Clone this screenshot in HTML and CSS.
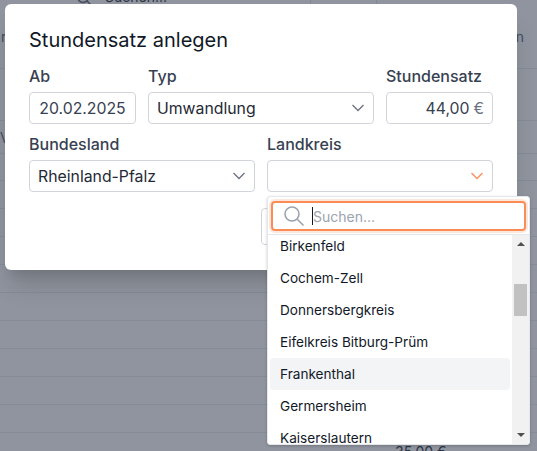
FILE: index.html
```html
<!DOCTYPE html>
<html lang="de">
<head>
  <meta charset="UTF-8">
  <meta name="viewport" content="width=device-width, initial-scale=1.0">
  <title>Stundensatz anlegen</title>
  <link rel="stylesheet" href="styles.css">
</head>
<body>
  <!-- table behind the modal -->
  <div class="page">
    <div class="top-search">
      <svg class="top-search-icon" width="16" height="16" viewBox="0 0 16 16"><circle cx="5" cy="-3" r="5.5" fill="none" stroke="#6b7280" stroke-width="1.5"/><path d="M9 1l4 4" stroke="#6b7280" stroke-width="1.5"/></svg>
      <span class="top-search-text">Suchen...</span>
      <div class="top-cell top-cell-first"></div>
      <div class="top-cell"></div>
    </div>
    <div class="table-head">
      <span>r</span>
      <span>n</span>
    </div>
    <div class="row row-52"></div>
    <div class="row row-33"><span>V</span></div>
    <div class="row row-27"></div>
    <div class="row"></div>
    <div class="row"></div>
    <div class="row"></div>
    <div class="row"></div>
    <div class="row"></div>
    <div class="row"></div>
    <div class="row"></div>
    <div class="row"></div>
    <div class="row"></div>
    <div class="row row-price"><span>35,00 €</span></div>
  </div>

  <div class="backdrop"></div>

  <div class="modal">
    <h2 class="modal-title">Stundensatz anlegen</h2>
    <div class="form-grid">
      <div class="field">
        <label>Ab</label>
        <div class="control control-center">20.02.2025</div>
      </div>
      <div class="field span-2">
        <label>Typ</label>
        <div class="control control-select">
          <span>Umwandlung</span>
          <svg class="chevron" width="14" height="8" viewBox="0 0 14 8"><path d="M1.5 1l5.5 5.5L12.5 1" fill="none" stroke="#6b7280" stroke-width="1.3"/></svg>
        </div>
      </div>
      <div class="field">
        <label>Stundensatz</label>
        <div class="control control-right">44,00 <span class="currency">€</span></div>
      </div>
      <div class="field span-2">
        <label>Bundesland</label>
        <div class="control control-select">
          <span>Rheinland-Pfalz</span>
          <svg class="chevron" width="14" height="8" viewBox="0 0 14 8"><path d="M1.5 1l5.5 5.5L12.5 1" fill="none" stroke="#6b7280" stroke-width="1.3"/></svg>
        </div>
      </div>
      <div class="field span-2">
        <label>Landkreis</label>
        <div class="control control-select">
          <span></span>
          <svg class="chevron" width="14" height="8" viewBox="0 0 14 8"><path d="M1.5 1l5.5 5.5L12.5 1" fill="none" stroke="#fb8c55" stroke-width="1.3"/></svg>
        </div>
      </div>
    </div>
    <div class="modal-footer">
      <button class="btn">Abbrechen</button>
      <button class="btn">Speichern</button>
    </div>
  </div>

  <div class="dropdown">
    <div class="search-wrap">
      <div class="search-box">
        <svg width="22" height="22" viewBox="0 0 22 22"><circle cx="9" cy="9" r="7" fill="none" stroke="#9ca3af" stroke-width="1.6"/><path d="M14 14l6.5 6.5" stroke="#9ca3af" stroke-width="1.6"/></svg>
        <span class="caret"></span>
        <span class="placeholder">Suchen...</span>
      </div>
    </div>
    <div class="list-wrap">
      <ul class="list">
        <li>Birkenfeld</li>
        <li>Cochem-Zell</li>
        <li>Donnersbergkreis</li>
        <li>Eifelkreis Bitburg-Prüm</li>
        <li class="active">Frankenthal</li>
        <li>Germersheim</li>
        <li>Kaiserslautern</li>
      </ul>
      <div class="scrollbar">
        <span class="arrow arrow-up"></span>
        <div class="track"><div class="thumb"></div></div>
        <span class="arrow arrow-down"></span>
      </div>
    </div>
  </div>
</body>
</html>
```

FILE: styles.css
```css
/* page behind the modal */
html, body {
  height: 100%;
  margin: 0;
  padding: 0;
}

body {
  position: relative;
  overflow: hidden;
  background-color: #fff;
  font-family: Inter, "Liberation Sans", sans-serif;
}

.page {
  height: 451px;
  overflow: hidden;
  color: #374151;
  font-size: 14px;
}

.top-search {
  display: flex;
  gap: 11px;
  width: 442px;
  height: 4px;
  box-sizing: border-box;
  padding-left: 78px;
  overflow: hidden;
  line-height: 0;
}

.top-search-icon {
  flex: none;
}

.top-search-text {
  margin-top: -3px;
}

.top-cell {
  flex: none;
  width: 66px;
  height: 4px;
  margin-left: -11px;
  box-sizing: border-box;
  border-left: 1px solid #e5e7eb;
}

.top-cell-first {
  margin-left: auto;
}

.table-head {
  display: flex;
  justify-content: space-between;
  align-items: center;
  height: 65px;
  box-sizing: border-box;
  padding: 0 13px 0 1px;
  border-bottom: 1px solid #eceef1;
  color: #6b7280;
  font-size: 14px;
}

.row {
  height: 28px;
  box-sizing: border-box;
  border-bottom: 1px solid #eceef1;
}

.row-52 {
  height: 52px;
}

.row-33 {
  height: 33px;
  color: #6b7280;
  line-height: 33px;
}

.row-27 {
  height: 27px;
}

.row-price {
  padding-top: 10px;
  padding-left: 395px;
  border-bottom: none;
  height: 40px;
  font-size: 14px;
  line-height: 17px;
}

.backdrop {
  position: absolute;
  top: 0;
  left: 0;
  right: 0;
  bottom: 0;
  background-color: rgba(31, 41, 61, 0.5);
}

/* modal */
.modal {
  position: absolute;
  top: 4px;
  left: 5px;
  width: 512px;
  height: 266px;
  box-sizing: border-box;
  padding: 24px;
  background-color: #fff;
  border-radius: 6px;
  box-shadow: 0 20px 25px -5px rgba(0, 0, 0, 0.15), 0 10px 10px -5px rgba(0, 0, 0, 0.08);
}

.modal-title {
  margin: 0 0 14px;
  color: #111827;
  font-size: 20px;
  font-weight: 400;
  line-height: 24px;
}

.form-grid {
  display: grid;
  grid-template-columns: repeat(4, 107px);
  column-gap: 12px;
  row-gap: 10px;
}

.span-2 {
  grid-column: span 2;
}

.field label {
  display: block;
  height: 20px;
  margin-bottom: 6px;
  color: #374151;
  font-size: 16px;
  font-weight: 500;
  line-height: 20px;
}

.control {
  display: flex;
  align-items: center;
  height: 32px;
  box-sizing: border-box;
  padding: 0 8px;
  border: 1px solid #d1d5db;
  border-radius: 4px;
  color: #374151;
  font-size: 15.8px;
}

.control-center {
  justify-content: center;
  padding: 0;
}

.control-select {
  justify-content: space-between;
  color: #1f2937;
}

.control-right {
  justify-content: flex-end;
  gap: 4px;
}

.currency {
  color: #6b7280;
}

.modal-footer {
  display: flex;
  justify-content: flex-end;
  gap: 8px;
  margin-top: 16px;
}

.btn {
  height: 37px;
  width: 112px;
  background-color: #fff;
  border: 1px solid #d1d5db;
  border-radius: 4px;
  font-family: inherit;
  font-size: 14px;
}

/* Landkreis dropdown */
.dropdown {
  position: absolute;
  top: 196px;
  left: 267px;
  width: 263px;
  height: 249px;
  box-sizing: border-box;
  background-color: #fff;
  border: 1px solid #e5e7eb;
  border-radius: 3px;
  box-shadow: 0 1px 3px rgba(0, 0, 0, 0.2);
  overflow: hidden;
}

.search-wrap {
  height: 38px;
  box-sizing: border-box;
  padding: 4px 3px;
  border-bottom: 1px solid #e5e7eb;
}

.search-box {
  display: flex;
  align-items: center;
  height: 30px;
  width: 255px;
  box-sizing: border-box;
  padding-left: 10px;
  border: 2px solid #fb8c55;
  border-radius: 4px;
  box-shadow: 0 0 0 2px rgba(251, 140, 85, 0.2);
}

.caret {
  width: 1px;
  height: 18px;
  margin-left: 7px;
  background-color: #111827;
}

.placeholder {
  color: #9ca3af;
  font-size: 14px;
}

.list-wrap {
  display: flex;
  height: 209px;
}

.list {
  flex: 1;
  margin: -5px 0 0;
  padding: 0 2px;
  list-style-type: none;
  color: #111827;
  font-size: 13.6px;
}

.list li {
  height: 32px;
  padding-left: 10px;
  line-height: 32px;
  border-radius: 4px;
}

.list .active {
  background-color: #f3f4f6;
}

.scrollbar {
  display: flex;
  flex-direction: column;
  align-items: center;
  flex: none;
  width: 17px;
  background-color: #f1f1f1;
}

.arrow {
  flex: none;
  width: 0;
  height: 0;
  margin: 7px 0;
  border-left: 4px solid transparent;
  border-right: 4px solid transparent;
}

.arrow-up {
  border-bottom: 4px solid #505050;
}

.arrow-down {
  border-top: 4px solid #505050;
}

.track {
  flex: 1;
  width: 13px;
}

.thumb {
  height: 32px;
  margin-top: 31px;
  background-color: #c1c1c1;
}
```
